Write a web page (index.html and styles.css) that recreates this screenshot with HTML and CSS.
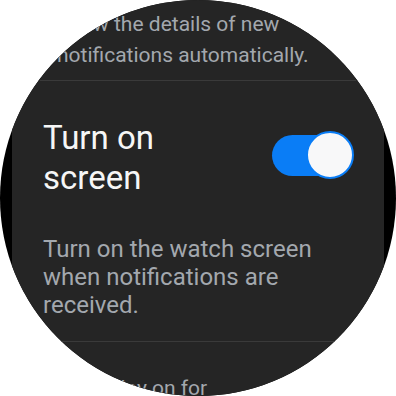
FILE: index.html
```html
<!DOCTYPE html>
<html lang="en">
<head>
  <meta charset="UTF-8">
  <title>Notification settings</title>
  <link rel="stylesheet" href="styles.css">
</head>
<body>
  <div class="watch">
    <div class="screen">
      <p class="summary">Show the details of new notifications automatically.</p>
      <div class="divider"></div>

      <div class="item">
        <div class="item-head">
          <h2 class="title">Turn on screen</h2>
          <div class="switch on"><span class="knob"></span></div>
        </div>
        <p class="desc">Turn on the watch screen when notifications are received.</p>
      </div>
      <div class="divider low"></div>

      <p class="next">Display on for</p>
    </div>
  </div>
</body>
</html>
```

FILE: styles.css
```css
html, body {
  margin: 0;
  padding: 0;
  background: #fff;
  font-family: Roboto, 'Noto Sans', sans-serif;
}

.watch {
  width: 396px;
  height: 396px;
  border-radius: 50%;
  background: #000;
  overflow: hidden;
}

.screen {
  margin: 0 12px;
  height: 100%;
  background: #252525;
  overflow: hidden;
}

/* items near the rim are drawn a bit smaller */
.summary {
  margin: 0;
  padding: 9px 20px 0 45px;
  font-size: 21px;
  line-height: 31px;
  color: #a3a8ae;
}

.divider {
  height: 1px;
  margin: 9px 28px 0;
  background: #3a3a3a;
}

.divider.low {
  margin-top: 22px;
}

.item {
  padding: 37px 30px 0 31px;
}

.item-head {
  display: flex;
  justify-content: space-between;
  align-items: center;
}

.title {
  margin: 0;
  font-size: 33px;
  font-weight: 400;
  line-height: 40px;
  color: #f6f6f6;
  width: 200px;
}

.switch {
  position: relative;
  width: 82px;
  height: 48px;
  margin-bottom: 6px;
}

.switch::before {
  content: '';
  position: absolute;
  left: 0;
  top: 4px;
  width: 70px;
  height: 41px;
  border-radius: 21px;
  background: #0a7df6;
}

.knob {
  position: absolute;
  right: 0;
  top: 0;
  width: 44px;
  height: 44px;
  border-radius: 50%;
  background: #f8f8f9;
  border: 2px solid #0a7df6;
}

.desc {
  margin: 37px 30px 0 0;
  font-size: 24px;
  line-height: 28px;
  color: #a3a8ae;
}

.next {
  margin: 0;
  padding: 32px 0 0 67px;
  font-size: 21px;
  line-height: 28px;
  color: #a3a8ae;
}
```
